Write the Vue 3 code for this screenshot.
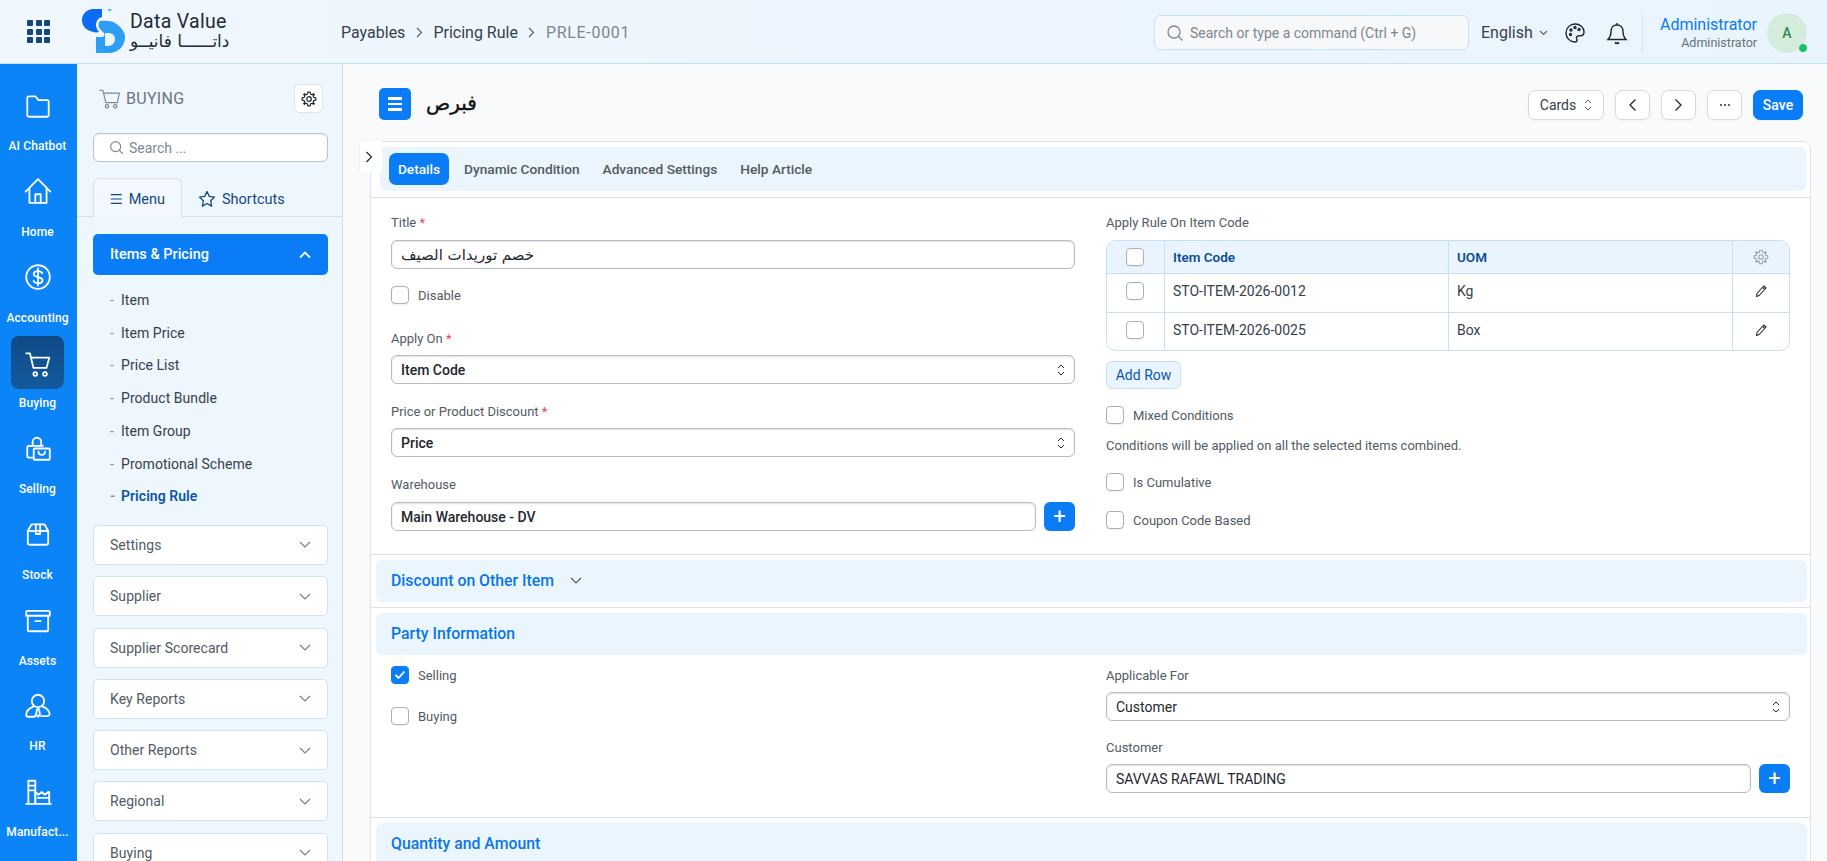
<script setup>
const rail = [
  { label: 'AI Chatbot', paths: ['M4 6.5a1.5 1.5 0 0 1 1.5-1.5h6l3 3.5h8a1.5 1.5 0 0 1 1.5 1.5v12.5a1.5 1.5 0 0 1-1.5 1.5h-17a1.5 1.5 0 0 1-1.5-1.5z'] },
  { label: 'Home', paths: ['M2.5 14.5 14 3l11.5 11.5', 'M6 12v13h16V12', 'M11.5 25v-8h5v8'] },
  { label: 'Accounting', paths: ['M14 3a11 11 0 1 1 0 22 11 11 0 0 1 0-22z', 'M18 10.5c-.6-1.4-2.2-2-4-2-2.2 0-4 1-4 2.8 0 4 8.2 1.9 8.2 5.7 0 1.8-1.9 2.8-4.200 2.800-1.900 0-3.600-.8-4.200-2.300', 'M14 6v16'] },
  { label: 'Buying', active: true, paths: ['M3 5h3.500l3.200 13.500h12.300l2.500-9.500H7.500', 'M11.500 22.500a1.800 1.800 0 1 1-.01 0z', 'M20.500 22.500a1.800 1.800 0 1 1-.01 0z'] },
  { label: 'Selling', paths: ['M5 11h13.500', 'M9 11V7.500a4 4 0 0 1 8 0V11', 'M10 22H5.500A1.500 1.500 0 0 1 4 20.500v-8A1.500 1.500 0 0 1 5.500 11H9', 'M11 13.500h13a1 1 0 0 1 1 1V23a1 1 0 0 1-1 1H11a1 1 0 0 1-1-1v-8.500a1 1 0 0 1 1-1z', 'M14.500 16.500c0 4 6 4 6 0'] },
  { label: 'Stock', paths: ['M4.500 11v11.500a1.500 1.500 0 0 0 1.500 1.500h16a1.500 1.500 0 0 0 1.500-1.500V11', 'M4.500 11 8 5h12l3.500 6z', 'M12 5v9h4V5', 'M4.500 11H12M16 11h7.500'] },
  { label: 'Assets', paths: ['M4 5.500h20a1 1 0 0 1 1 1V10H3V6.500a1 1 0 0 1 1-1z', 'M4.500 10v13a1.500 1.500 0 0 0 1.500 1.500h16a1.500 1.500 0 0 0 1.500-1.500V10', 'M11.500 15h5'] },
  { label: 'HR', paths: ['M14 3.500a5.800 5.800 0 1 1 0 11.600 5.800 5.800 0 0 1 0-11.600z', 'M9.500 14.500c-3.800 1.500-6.500 4.500-6.500 8 0 1 .8 1.500 1.500 1.500h6c.7 0 .9-.5.9-1.200', 'M18.500 14.500c2.800 1 5 3 6 5.500 1 1.500 0 3.500-2 3.500H17', 'M13 17h2l.8 5-1.800 2-1.800-2z'] },
  { label: 'Manufact...', paths: ['M3 25h23', 'M5 25V3.500h6.500V25', 'M5 8h6.500M5 12.500h6.500', 'M11.500 25V14l3 2.500 3-2.500 3 2.500 3-2.500h1V25', 'M14 19.500h10'] },
]
const subs = ['Item', 'Item Price', 'Price List', 'Product Bundle', 'Item Group', 'Promotional Scheme', 'Pricing Rule']
const groups = ['Settings', 'Supplier', 'Supplier Scorecard', 'Key Reports', 'Other Reports', 'Regional', 'Buying']
const tabs = ['Dynamic Condition', 'Advanced Settings', 'Help Article']
const rows = [
  { code: 'STO-ITEM-2026-0012', uom: 'Kg' },
  { code: 'STO-ITEM-2026-0025', uom: 'Box' },
]
const cog = '6.8,1.2 9.2,1.2 9.6,3.2 11.1,3.8 12.6,2.7 13.3,3.4 12.2,4.9 12.8,6.4 14.8,6.8 14.8,9.2 12.8,9.6 12.2,11.1 13.3,12.6 12.6,13.3 11.1,12.2 9.6,12.8 9.2,14.8 6.8,14.8 6.4,12.8 4.9,12.2 3.4,13.3 2.7,12.6 3.8,11.1 3.2,9.6 1.2,9.2 1.2,6.8 3.2,6.4 3.8,4.9 2.7,3.4 3.4,2.7 4.9,3.8 6.4,3.2'
</script>

<template>
  <div class="app">
    <header class="topbar">
      <div class="grid-icon"><i v-for="n in 9" :key="n"></i></div>
      <div class="logo">
        <svg width="46" height="46" viewBox="0 0 46 46" class="logo-mark">
          <path fill="#0a6cf0" d="M13 2h9v8c-4 1-6 4-6 8 0 2 1 5 3 7-3 1-7 0-11-2C4 21 2 17 2 13 2 7 7 2 13 2z" />
          <path fill="#2d9df5" d="M20 14c8-1 14 0 18 4s7 7 7 12c0 9-7 16-16 16H16V30h6c3 0 3-3 1-5-4-3-6-7-3-11z" />
          <path fill="#eaf4fd" d="M25 26h3c4 0 7 2 7 6s-3 7-7 7h-3z" />
          <path fill="#5cc0f0" d="M27 2h5l-2 3z" />
        </svg>
        <div class="logo-text">
          <span class="logo-en">Data Value</span>
          <span class="logo-ar">داتــــــا فانيــو</span>
        </div>
      </div>
      <nav class="crumbs">
        <span>Payables</span>
        <svg class="crumb-sep" width="7" height="11" viewBox="0 0 7 11" fill="none" stroke="#525a63" stroke-width="1.100"><path d="m1 1 4.500 4.500L1 10" /></svg>
        <span>Pricing Rule</span>
        <svg class="crumb-sep" width="7" height="11" viewBox="0 0 7 11" fill="none" stroke="#525a63" stroke-width="1.100"><path d="m1 1 4.500 4.500L1 10" /></svg>
        <span class="crumb-last">PRLE-0001</span>
      </nav>
      <div class="top-right">
        <div class="cmd">
          <svg width="18" height="18" viewBox="0 0 18 18" fill="none" stroke="#7c8790" stroke-width="1.300"><circle cx="8" cy="8" r="6" /><path d="m12.500 12.500 4 4" /></svg>
          <span>Search or type a command (Ctrl + G)</span>
        </div>
        <div class="lang">English <svg width="9" height="6" viewBox="0 0 9 6" fill="none" stroke="#59636c" stroke-width="1.100"><path d="m1 1 3.500 3.500L8 1" /></svg></div>
        <svg class="palette" width="22" height="22" viewBox="0 0 22 22" fill="none" stroke="#1f272e" stroke-width="1.400"><path d="M11 2C6 2 2 6 2 11s4 9 9 9c1.500 0 2-1 2-2 0-1.500-1-2-.5-3 .5-1.200 2-1.200 3.500-1.200 2.500 0 4-1.300 4-3.800C20 5.500 16 2 11 2z" /><circle cx="7" cy="8" r="1" /><circle cx="11" cy="5.500" r="1" /><circle cx="15" cy="7.500" r="1" /><circle cx="6.500" cy="12.500" r="1" /></svg>
        <svg class="bell" width="22" height="24" viewBox="0 0 22 24" fill="none" stroke="#1f272e" stroke-width="1.400"><path d="M11 2v2M11 4c-4 0-6 3-6 6.500 0 4-1 6-3 8h18c-2-2-3-4-3-8C17 7 15 4 11 4z" /><path d="M9 21.500c1 1 3 1 4 0" stroke-width="1.800" /></svg>
        <div class="user">
          <span class="user-name">Administrator</span>
          <span class="user-role">Administrator</span>
        </div>
        <div class="avatar">A<i></i></div>
      </div>
    </header>

    <div class="body">
      <aside class="rail">
        <div v-for="item in rail" :key="item.label" class="rail-item">
          <div class="rail-icon" :class="{ active: item.active }">
            <svg width="30" height="30" viewBox="0 0 28 28" fill="none" stroke="#fff" stroke-width="1.700" stroke-linecap="round" stroke-linejoin="round">
              <path v-for="d in item.paths" :key="d" :d="d" />
            </svg>
          </div>
          <span class="rail-label">{{ item.label }}</span>
        </div>
      </aside>

      <aside class="side">
        <div class="side-head">
          <div class="side-title">
            <svg width="23" height="23" viewBox="0 0 28 28" fill="none" stroke="#7c8790" stroke-width="1.400" stroke-linejoin="round" stroke-linecap="round"><path d="M2 4h4l3.500 15h14l2.500-11.500H7" /><circle cx="11" cy="23.500" r="2" /><circle cx="21" cy="23.500" r="2" /></svg>
            <span>BUYING</span>
          </div>
          <button class="gear-btn">
            <svg width="16" height="16" viewBox="0 0 16 16" fill="none" stroke="#1f272e" stroke-width="1.200" stroke-linejoin="round"><polygon :points="cog" /><circle cx="8" cy="8" r="2.300" /></svg>
          </button>
        </div>
        <div class="side-search">
          <svg width="15" height="15" viewBox="0 0 18 18" fill="none" stroke="#7c8790" stroke-width="1.400"><circle cx="8" cy="8" r="6" /><path d="m12.500 12.500 4 4" /></svg>
          <span>Search ...</span>
        </div>
        <div class="side-tabs">
          <div class="side-tab current">
            <svg width="16" height="14" viewBox="0 0 16 14" fill="none" stroke="#14477e" stroke-width="1.500"><path d="M1 1.500h14M1 7h14M1 12.500h14" /></svg>
            <span>Menu</span>
          </div>
          <div class="side-tab">
            <svg width="18" height="18" viewBox="0 0 18 18" fill="none" stroke="#14477e" stroke-width="1.300" stroke-linejoin="round"><path d="m9 1.500 2.300 4.900 5.200.7-3.800 3.700.9 5.300L9 13.500l-4.600 2.600.9-5.300L1.500 7.100l5.200-.7z" /></svg>
            <span>Shortcuts</span>
          </div>
        </div>
        <div class="acc-open">
          <span>Items &amp; Pricing</span>
          <svg width="12" height="8" viewBox="0 0 12 8" fill="none" stroke="#fff" stroke-width="1.800"><path d="m1 6.500 5-5 5 5" /></svg>
        </div>
        <ul class="subs">
          <li v-for="s in subs" :key="s" :class="{ on: s === 'Pricing Rule' }"><i>-</i>{{ s }}</li>
        </ul>
        <div v-for="g in groups" :key="g" class="acc">
          <span>{{ g }}</span>
          <svg width="12" height="7" viewBox="0 0 12 7" fill="none" stroke="#75808a" stroke-width="1.200"><path d="m1 1 5 5 5-5" /></svg>
        </div>
      </aside>

      <main class="main">
        <div class="page-head">
          <div class="page-title">
            <div class="page-burger"><i></i><i></i><i></i></div>
            <h1>فبرص</h1>
          </div>
          <div class="actions">
            <button class="btn cards">Cards
              <svg width="8" height="12" viewBox="0 0 8 12" fill="none" stroke="#59636c" stroke-width="1"><path d="m1 4 3-3 3 3M1 8l3 3 3-3" /></svg>
            </button>
            <button class="btn icon"><svg width="9" height="14" viewBox="0 0 9 14" fill="none" stroke="#1f272e" stroke-width="1.300"><path d="M7.500 1.500 2 7l5.500 5.500" /></svg></button>
            <button class="btn icon"><svg width="9" height="14" viewBox="0 0 9 14" fill="none" stroke="#1f272e" stroke-width="1.300"><path d="M1.500 1.500 7 7l-5.500 5.500" /></svg></button>
            <button class="btn icon"><svg width="12" height="4" viewBox="0 0 12 4" fill="#36414c"><circle cx="2" cy="2" r="1.100" /><circle cx="6" cy="2" r="1.100" /><circle cx="10" cy="2" r="1.100" /></svg></button>
            <button class="btn save">Save</button>
          </div>
        </div>

        <div class="card">
          <div class="handle"><svg width="8" height="12" viewBox="0 0 8 12" fill="none" stroke="#1f272e" stroke-width="1.200"><path d="m1.500 1 5 5-5 5" /></svg></div>
          <div class="tabs-wrap">
            <div class="tabs">
              <span class="tab-on">Details</span>
              <span v-for="t in tabs" :key="t" class="tab">{{ t }}</span>
            </div>
          </div>

          <section class="form form-main">
            <div class="col">
              <label class="lbl">Title <em>*</em></label>
              <div class="input ar">خصم توريدات الصيف</div>
              <div class="check gap-disable"><i class="box"></i><span>Disable</span></div>
              <label class="lbl tight">Apply On <em>*</em></label>
              <div class="input select bold">Item Code
                <svg width="8" height="12" viewBox="0 0 8 12" fill="none" stroke="#1f272e" stroke-width="1"><path d="m1 4 3-3 3 3M1 8l3 3 3-3" /></svg>
              </div>
              <label class="lbl tight mt19">Price or Product Discount <em>*</em></label>
              <div class="input select bold">Price
                <svg width="8" height="12" viewBox="0 0 8 12" fill="none" stroke="#1f272e" stroke-width="1"><path d="m1 4 3-3 3 3M1 8l3 3 3-3" /></svg>
              </div>
              <label class="lbl mt19">Warehouse</label>
              <div class="with-add">
                <div class="input bold grow">Main Warehouse - DV</div>
                <button class="add">+</button>
              </div>
            </div>
            <div class="col">
              <label class="lbl">Apply Rule On Item Code</label>
              <div class="table">
                <div class="tr th">
                  <div class="c0"><i class="box"></i></div>
                  <div class="c1">Item Code</div>
                  <div class="c2">UOM</div>
                  <div class="c3">
                    <svg width="16" height="16" viewBox="0 0 16 16" fill="none" stroke="#98a3ad" stroke-width="1.100" stroke-linejoin="round"><polygon :points="cog" /><circle cx="8" cy="8" r="2.300" /></svg>
                  </div>
                </div>
                <div v-for="r in rows" :key="r.code" class="tr">
                  <div class="c0"><i class="box"></i></div>
                  <div class="c1">{{ r.code }}</div>
                  <div class="c2">{{ r.uom }}</div>
                  <div class="c3">
                    <svg width="14" height="14" viewBox="0 0 14 14" fill="none" stroke="#1f272e" stroke-width="1.100" stroke-linejoin="round"><path d="M3 9.500 9.800 2l2.200 2-6.800 7.500L2.500 12.500z" /><path d="m8.600 3.300 2.200 2" /></svg>
                  </div>
                </div>
              </div>
              <button class="add-row">Add Row</button>
              <div class="check mt17"><i class="box"></i><span>Mixed Conditions</span></div>
              <p class="hint">Conditions will be applied on all the selected items combined.</p>
              <div class="check mt18"><i class="box"></i><span>Is Cumulative</span></div>
              <div class="check mt20"><i class="box"></i><span>Coupon Code Based</span></div>
            </div>
          </section>

          <section class="sec">
            <div class="band">Discount on Other Item
              <svg width="12" height="7" viewBox="0 0 12 7" fill="none" stroke="#4c5a67" stroke-width="1.200"><path d="m1 1 5 5 5-5" /></svg>
            </div>
          </section>

          <section class="sec">
            <div class="band">Party Information</div>
            <div class="form form-party">
              <div class="col">
                <div class="check"><i class="box checked"><svg width="12" height="10" viewBox="0 0 12 10" fill="none" stroke="#fff" stroke-width="1.800"><path d="m1.500 5 3 3 6-6.500" /></svg></i><span>Selling</span></div>
                <div class="check mt23"><i class="box"></i><span>Buying</span></div>
              </div>
              <div class="col party-right">
                <label class="lbl">Applicable For</label>
                <div class="input select tight-in">Customer
                  <svg width="8" height="12" viewBox="0 0 8 12" fill="none" stroke="#1f272e" stroke-width="1"><path d="m1 4 3-3 3 3M1 8l3 3 3-3" /></svg>
                </div>
                <label class="lbl mt18 tight">Customer</label>
                <div class="with-add">
                  <div class="input grow">SAVVAS RAFAWL TRADING</div>
                  <button class="add">+</button>
                </div>
              </div>
            </div>
          </section>

          <section class="sec">
            <div class="band">Quantity and Amount</div>
          </section>
        </div>
      </main>
    </div>
  </div>
</template>

<style scoped>
* { box-sizing: border-box; }
.app { width: 1827px; height: 861px; overflow: hidden; font-family: Roboto, "DejaVu Sans", sans-serif; color: #1f272e; background: #f9fafb; display: flex; flex-direction: column; }
button { font-family: inherit; cursor: default; }

.topbar { height: 64px; flex: none; display: flex; align-items: center; background: linear-gradient(90deg, #f0f7fe, #e9f4fd); border-bottom: 1px solid #c5e0f8; padding: 2px 0 0 27px; }
.grid-icon { width: 23px; height: 23px; display: grid; grid-template-columns: repeat(3, 6px); grid-template-rows: repeat(3, 6px); gap: 2.500px; margin-right: 30px; margin-top: -2px; }
.grid-icon i { background: #14477e; border-radius: 1px; }
.logo { display: flex; align-items: center; width: 261px; height: 60px; flex: none; }
.logo-mark { flex: none; margin-right: 4px; margin-top: -5px; }
.logo-text { display: flex; flex-direction: column; line-height: 20px; color: #1f2a36; margin-top: -2px; }
.logo-en { font-size: 19.500px; letter-spacing: .3px; }
.logo-ar { font: 17px/19px "DejaVu Sans", sans-serif; text-align: left; }
.crumbs { display: flex; align-items: center; font-size: 16px; color: #36414c; }
.crumb-sep { margin: 0 10.500px; flex: none; }
.crumb-last { color: #7c8790; letter-spacing: .7px; }
.top-right { margin-left: auto; display: flex; align-items: center; padding-right: 20px; }
.cmd { width: 315px; height: 35px; display: flex; align-items: center; gap: 6px; background: #f6f8fa; border: 1px solid #c5e0f8; border-radius: 6px; padding-left: 11px; font-size: 14px; color: #7c8790; }
.lang { margin-left: 12px; font-size: 16px; color: #36414c; display: flex; align-items: center; gap: 6px; width: 79px; }
.palette { margin-left: 4px; }
.bell { margin-left: 20px; }
.user { margin-left: 14px; padding-left: 15px; border-left: 1px solid #d5e4f0; width: 115px; display: flex; flex-direction: column; align-items: flex-end; line-height: 18px; padding-top: 2px; }
.user-name { font-size: 16px; color: #0a7bf0; }
.user-role { font-size: 12.500px; color: #66717b; }
.avatar { position: relative; width: 40px; height: 40px; border-radius: 50%; margin-left: 10px; background: #d5ecdc; color: #2e8a55; font-size: 14px; font-weight: 500; display: flex; align-items: center; justify-content: center; }
.avatar i { position: absolute; right: -1px; bottom: 0; width: 10px; height: 10px; border-radius: 50%; background: #1cc06b; border: 1px solid #e5f5ea; }

.body { flex: 1; display: flex; min-height: 0; }
.rail { width: 77px; flex: none; background: #0a84f7; padding: 15px 2px 0 0; }
.rail-item { height: 85.750px; display: flex; flex-direction: column; align-items: center; }
.rail-icon { width: 53px; height: 53px; border-radius: 8px; display: flex; align-items: center; justify-content: center; }
.rail-icon.active { background: linear-gradient(#0f4a86, #135a9d); }
.rail-label { margin-top: 6px; font-size: 12px; line-height: 17px; font-weight: 500; color: #fff; white-space: nowrap; letter-spacing: .1px; }

.side { width: 266px; flex: none; background: #eef6fe; border-right: 1px solid #c9e0f7; padding-top: 20px; overflow: hidden; }
.side-head { display: flex; justify-content: space-between; align-items: center; padding: 0 19px 0 21px; height: 29px; }
.side-title { display: flex; align-items: center; gap: 5px; color: #6b7680; font-size: 16px; letter-spacing: .3px; }
.gear-btn { width: 29px; height: 29px; background: #fff; border: 1px solid #dfe5ea; border-radius: 6px; padding: 0; display: flex; align-items: center; justify-content: center; }
.side-search { margin: 20px 14px 0 16px; height: 29px; background: #fff; border: 1px solid #bcc3c9; border-radius: 6px; display: flex; align-items: center; gap: 5px; padding-left: 15px; font-size: 14px; color: #7c8790; box-shadow: inset 0 1px 2px rgba(0,0,0,.08); }
.side-tabs { margin-top: 16px; height: 39px; display: flex; border-bottom: 1px solid #d8dfe5; padding-left: 16px; }
.side-tab { display: flex; align-items: center; gap: 6px; padding: 3px 16px 0; font-size: 14.500px; color: #14477e; height: 39px; }
.side-tab.current { width: 89px; background: #f3f8fe; border: 1px solid #d8dfe5; border-bottom: 1px solid #eef6fe; border-radius: 6px 6px 0 0; }
.acc-open { margin: 17px 14px 0 16px; height: 41px; background: #0a7cf5; border-radius: 5px; color: #fff; display: flex; align-items: center; justify-content: space-between; padding: 0 17px; font-size: 14.500px; font-weight: 500; }
.subs { list-style: none; margin: 9px 0 0; padding: 0 0 0 33px; font-size: 14px; line-height: 32.700px; color: #36414c; letter-spacing: .05px; }
.subs li { white-space: nowrap; }
.subs i { font-style: normal; color: #8a949d; display: inline-block; width: 11px; }
.subs .on { color: #0c58a8; font-weight: 600; }
.acc { margin: 0 14px 11.300px 16px; height: 40px; background: #fff; border: 1px solid #cfe4f8; border-radius: 5px; display: flex; align-items: center; justify-content: space-between; padding: 0 16px; font-size: 14px; color: #525a63; letter-spacing: .05px; flex: none; }
.subs + .acc { margin-top: 12px; }

.main { flex: 1; min-width: 0; padding: 0 16px 0 27px; overflow: hidden; background: #f9fafb; }
.page-head { height: 77px; display: flex; justify-content: space-between; align-items: flex-start; padding-top: 24px; }
.page-title { display: flex; align-items: center; gap: 15px; margin-left: 9px; }
.page-burger { width: 32px; height: 32px; background: #0a7cf5; border-radius: 5px; display: flex; flex-direction: column; justify-content: center; align-items: center; gap: 3px; }
.page-burger i { width: 14px; height: 2.500px; background: #fff; }
h1 { margin: -2px 0 0; font: 400 20px/32px "DejaVu Sans", sans-serif; -webkit-text-stroke: .35px #111; color: #111; }
.actions { display: flex; gap: 11px; margin-top: 2px; margin-right: 8px; }
.btn { height: 30px; background: #fff; border: 1px solid #d5dade; border-radius: 7px; display: flex; align-items: center; justify-content: center; font-size: 14px; color: #36414c; padding: 0; box-shadow: 0 1px 2px rgba(0,0,0,.04); }
.cards { width: 76px; gap: 8px; }
.icon { width: 35px; }
.save { width: 50px; background: #0a7cf5; border-color: #0a7cf5; color: #fff; font-weight: 500; }

.card { position: relative; background: #fff; border: 1px solid #dfe3e7; border-radius: 8px 8px 0 0; height: 800px; }
.handle { position: absolute; left: -11px; top: -1px; width: 22px; height: 32px; background: #fff; border-radius: 4px 0 0 4px; display: flex; align-items: center; justify-content: flex-start; padding-left: 5px; box-shadow: -1px 0 2px rgba(0,0,0,.04); }
.tabs-wrap { height: 56px; padding: 5px 4px 0 9px; border-bottom: 1px solid #dfe3e7; }
.tabs { height: 44px; background: #ebf5fe; border-radius: 6px; display: flex; align-items: center; padding-left: 9px; font-size: 13.700px; font-weight: 500; color: #525a63; }
.tab-on { height: 32px; width: 60px; background: #0a7cf5; color: #fff; border-radius: 7px; display: flex; align-items: center; justify-content: center; margin-right: 15px; }
.tab { margin-right: 23px; }

.form { display: grid; grid-template-columns: 684px 684px; gap: 31px; padding-left: 20px; }
.form-main { height: 356px; padding-top: 16px; }
.col { display: flex; flex-direction: column; align-items: stretch; min-width: 0; }
.lbl { display: block; height: 18px; line-height: 18px; font-size: 13px; color: #525a63; margin-bottom: 8px; }
.lbl.tight { margin-bottom: 7px; }
.lbl em { color: #e5484d; font-style: normal; }
.input { height: 29px; background: #fff; border: 1px solid #b5bcc3; border-radius: 6px; display: flex; align-items: center; justify-content: space-between; padding: 0 9px; font-size: 14px; color: #1f272e; box-shadow: inset 0 1px 2px rgba(0,0,0,.12); }
.input.bold { font-weight: 500; }
.input.ar { font: 15px "DejaVu Sans", sans-serif; }
.tight-in { margin-top: -1px; }
.check { display: flex; align-items: center; gap: 9px; height: 18px; font-size: 13px; color: #525a63; }
.gap-disable { margin: 17px 0 26px; }
.box { display: flex; align-items: center; justify-content: center; width: 18px; height: 18px; flex: none; border: 1px solid #a8b0b8; border-radius: 4px; background: #fff; box-shadow: 0 1px 1px rgba(0,0,0,.06); }
.box.checked { background: #0a7cf5; border-color: #0a7cf5; }
.mt17 { margin-top: 17px; }
.mt18 { margin-top: 18px; }
.mt19 { margin-top: 19px; }
.mt20 { margin-top: 20px; }
.mt23 { margin-top: 23px; }
.with-add { display: flex; gap: 8px; }
.grow { flex: 1; justify-content: flex-start; }
.add { width: 31px; height: 29px; background: #0a7cf5; border: 0; border-radius: 6px; color: #fff; font-size: 22px; line-height: 1; padding: 0; flex: none; }

.table { height: 111px; background: #fff; border: 1px solid #c5e0f8; border-radius: 10px; overflow: hidden; }
.tr { display: grid; grid-template-columns: 57px 284px 284px 1fr; height: 38.500px; border-top: 1px solid #c5e0f8; font-size: 14px; color: #36414c; }
.tr.th { height: 32px; border-top: 0; background: #e9f4fe; color: #0c4f94; font-weight: 600; font-size: 13.500px; }
.tr > div { display: flex; align-items: center; padding: 0 0 3px 8px; border-left: 1px solid #c5e0f8; }
.tr.th > div { padding-bottom: 1px; }
.tr > .c0 { border-left: 0; padding-left: 19px; }
.tr > .c3 { padding-left: 0; justify-content: center; }
.add-row { align-self: flex-start; margin-top: 10px; width: 75px; height: 28px; padding: 0; background: #e9f4fe; border: 1px solid #c5e0f8; border-radius: 6px; color: #0c58a8; font-size: 14px; }
.hint { margin: 13px 0 0; font-size: 13px; line-height: 18px; color: #525a63; }

.sec { border-top: 1px solid #dfe3e7; padding: 5px 3px 5px 5px; }
.band { height: 42px; background: #ebf5fe; border-radius: 6px; display: flex; align-items: center; gap: 16px; padding: 0 0 2px 15px; font-size: 15.800px; font-weight: 500; color: #0a75e6; }
.sec .form { margin: 0 -3px 0 -5px; }
.form-party { height: 157px; padding-top: 11px; }
.party-right { padding-top: 1px; }
</style>

<style>
html, body { margin: 0; overflow: hidden; background: #f9fafb; }
</style>
